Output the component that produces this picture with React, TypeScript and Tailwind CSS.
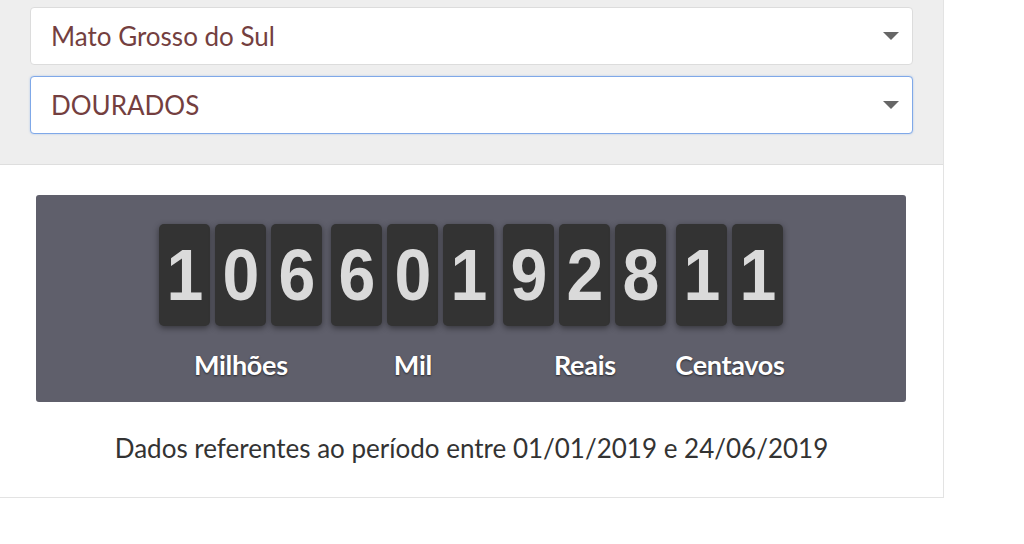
import React from 'react';

// Contador de gastos (valor em reais)
const grupos = [
    { digitos: ['1', '0', '6'], rotulo: 'Milhões' },
    { digitos: ['6', '0', '1'], rotulo: 'Mil' },
    { digitos: ['9', '2', '8'], rotulo: 'Reais' },
    { digitos: ['1', '1'], rotulo: 'Centavos' },
];

const selectStyle = "flex h-[58px] items-center justify-between rounded-[4px] border bg-white pl-[20px] pr-[13px] text-[26px] text-[#743f3f]";

function Caret() {
    return (
        <svg width="16" height="8" viewBox="0 0 16 8">
            <path d="M0 0 L16 0 L8 8 Z" fill="#666" />
        </svg>
    );
}

export default function App() {
    return (
        <div className="h-[544px] w-[1024px] overflow-hidden bg-white font-['Lato','Liberation_Sans',sans-serif]">
            <div className="w-[944px] border-r border-b border-[#e3e3e3]">
                {/* Filtros */}
                <div className="flex h-[165px] flex-col gap-[11px] border-b border-[#dedede] bg-[#eeeeee] px-[30px] pt-[7px]">
                    <div className={`${selectStyle} border-[#dcdcdc]`}>
                        <span>Mato Grosso do Sul</span>
                        <Caret />
                    </div>
                    <div className={`${selectStyle} border-[#7fa8e8] shadow-[0_0_2px_rgba(102,153,230,0.5)]`}>
                        <span>DOURADOS</span>
                        <Caret />
                    </div>
                </div>

                {/* Contador */}
                <div className="ml-[36px] mt-[30px] flex h-[207px] w-[870px] justify-center gap-[9px] rounded-[3px] bg-[#5f5f6b] pl-[2px] pt-[29px]">
                    {grupos.map((g) => (
                        <div key={g.rotulo} className="flex flex-col items-center">
                            <div className="flex gap-[5px]">
                                {g.digitos.map((d, i) => (
                                    <div
                                        key={i}
                                        className="flex h-[102px] w-[51px] items-center justify-center rounded-[5px] bg-[#333333] font-['Liberation_Sans',Arial,sans-serif] text-[72px] font-bold leading-none text-[#dadada] shadow-[0_2px_6px_rgba(0,0,0,0.45)]"
                                    >
                                        <span className="inline-block scale-x-[0.92]">{d}</span>
                                    </div>
                                ))}
                            </div>
                            <span className="mt-[24px] whitespace-nowrap text-[27px] font-bold leading-[30px] tracking-[-0.3px] text-white [text-shadow:0_1px_2px_rgba(0,0,0,0.6)]">
                                {g.rotulo}
                            </span>
                        </div>
                    ))}
                </div>

                <p className="pt-[31px] pb-[34px] text-center text-[26px] leading-[30px] text-[#333333]">
                    Dados referentes ao período entre 01/01/2019 e 24/06/2019
                </p>
            </div>
        </div>
    );
}
